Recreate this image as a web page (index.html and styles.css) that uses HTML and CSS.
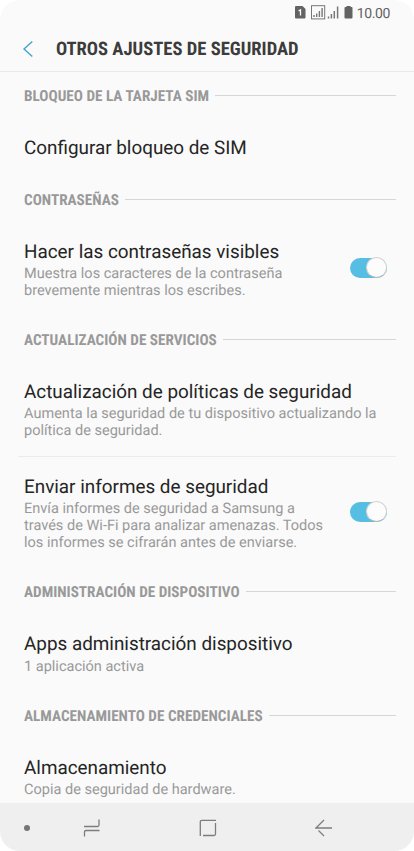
FILE: index.html
```
<!DOCTYPE html>
<html lang="es">
  <head>
    <meta charset="UTF-8" />
    <meta name="viewport" content="width=device-width, initial-scale=1.0" />
    <title>Otros ajustes de seguridad</title>
    <link rel="stylesheet" href="styles.css">
  </head>
  <body>
    <div class="screen">
      <div class="status">
        <svg width="60" height="16" viewBox="0 0 60 16">
          <path d="M2 1h6.500l3 3v8.500q0 1-1 1H2q-1 0-1-1V2q0-1 1-1z" fill="#636363" />
          <path d="M4.600 5.800L6.500 4.800V10.500" fill="none" stroke="#fafafa" stroke-width="1.300" />
          <rect x="17.500" y=".7" width="13.200" height="13.200" fill="none" stroke="#777" />
          <path d="M20 12v-2M22.700 12V8.500M25.400 12V6M28.100 12V3" stroke="#777" stroke-width="1.400" />
          <path d="M34.500 13.500v-2M37.400 13.500v-4.500M40.300 13.500V6M43.600 13.500V1.500" stroke="#777" stroke-width="1.500" />
          <path d="M52.500 1h4v1h1q1 0 1 1v9.500q0 1-1 1h-6q-1 0-1-1V3q0-1 1-1h1z" fill="#636363" />
        </svg>
        <span class="clock">10.00</span>
      </div>

      <header>
        <svg class="back" width="12" height="18" viewBox="0 0 12 18">
          <path d="M10.300 1.600L2 9l8.300 7.400" fill="none" stroke="#45a3cf" stroke-width="1.400" />
        </svg>
        <h1>OTROS AJUSTES DE SEGURIDAD</h1>
      </header>

      <main>
        <h2>BLOQUEO DE LA TARJETA SIM</h2>
        <div class="item">
          <h3>Configurar bloqueo de SIM</h3>
        </div>

        <h2>CONTRASEÑAS</h2>
        <div class="item">
          <h3>Hacer las contraseñas visibles</h3>
          <p>Muestra los caracteres de la contraseña<br>brevemente mientras los escribes.</p>
          <span class="switch"></span>
        </div>

        <h2>ACTUALIZACIÓN DE SERVICIOS</h2>
        <div class="item divided">
          <h3>Actualización de políticas de seguridad</h3>
          <p>Aumenta la seguridad de tu dispositivo actualizando la<br>política de seguridad.</p>
        </div>
        <div class="item after">
          <h3>Enviar informes de seguridad</h3>
          <p>Envía informes de seguridad a Samsung a<br>través de Wi-Fi para analizar amenazas. Todos<br>los informes se cifrarán antes de enviarse.</p>
          <span class="switch"></span>
        </div>

        <h2>ADMINISTRACIÓN DE DISPOSITIVO</h2>
        <div class="item last">
          <h3>Apps administración dispositivo</h3>
          <p>1 aplicación activa</p>
        </div>

        <h2>ALMACENAMIENTO DE CREDENCIALES</h2>
        <div class="item">
          <h3>Almacenamiento</h3>
          <p>Copia de seguridad de hardware.</p>
        </div>
      </main>

      <nav>
        <span class="dot"></span>
        <svg class="recents" width="18" height="20" viewBox="0 0 18 20">
          <path d="M1 8.500h13.500q1.500 0 1.500-1.500V1.500M1.500 18.500V14q0-1.500 1.500-1.500h13.500" fill="none" stroke="#7d7d7d" stroke-width="1.300" />
        </svg>
        <svg class="home" width="18" height="18" viewBox="0 0 18 18">
          <path d="M1.300 17V2.800q0-1.500 1.500-1.500H17M16.500 4v11q0 1.500-1.500 1.500H4" fill="none" stroke="#7d7d7d" stroke-width="1.300" />
        </svg>
        <svg class="return" width="18" height="18" viewBox="0 0 18 18">
          <path d="M9 1L1 9h16M3.500 11.500L9 17" fill="none" stroke="#7d7d7d" stroke-width="1.300" />
        </svg>
      </nav>
    </div>
  </body>
</html>
```
FILE: styles.css
```
body {
  margin: 0;
  background-color: white;
  font-family: Roboto, sans-serif;
  text-rendering: geometricPrecision;
}

h1,
h2,
h3,
p {
  margin: 0;
  font-weight: 400;
  white-space: nowrap;
}

.screen {
  display: flex;
  flex-direction: column;
  width: 414px;
  height: 851px;
  overflow: hidden;
  border-radius: 20px;
  background-color: #fafafa;
}

.status {
  display: flex;
  flex: none;
  align-items: center;
  justify-content: flex-end;
  height: 26px;
  padding-right: 24px;
}

.clock {
  margin-left: 3px;
  padding-top: 1px;
  font-size: 14px;
  letter-spacing: -0.4px;
  color: #636363;
}

header {
  display: flex;
  flex: none;
  align-items: center;
  box-sizing: border-box;
  height: 46px;
  padding-left: 22px;
  border-bottom: 1px solid #e9e9e9;
}

header h1 {
  margin-left: 22px;
  padding-top: 1px;
  font-family: "Roboto Condensed", Roboto, sans-serif;
  font-stretch: 75%;
  font-size: 18.6px;
  font-weight: 700;
  color: #3c3c3c;
}

main {
  flex: 1;
  min-height: 0;
  overflow: hidden;
  padding: 11px 18px 0;
}

h2 {
  display: flex;
  align-items: center;
  box-sizing: border-box;
  height: 24px;
  padding: 2px 0 0 6px;
  font-family: "Roboto Condensed", Roboto, sans-serif;
  font-stretch: 75%;
  font-size: 15.2px;
  line-height: 20px;
  font-weight: 700;
  color: #999;
}

/* streg efter overskriften */
h2::after {
  content: "";
  flex: 1;
  height: 1px;
  margin: 0 0 2px 6px;
  background-color: #d6d6d6;
}

.item {
  position: relative;
  padding: 29px 6px 28px;
}

.item h3 {
  font-size: 18.87px;
  line-height: 24px;
  color: #252525;
}

.item p {
  margin-top: 1px;
  font-size: 14.54px;
  line-height: 17px;
  color: #999;
}

.divided {
  padding-bottom: 17px;
  border-bottom: 1px solid #ebebeb;
}

.after {
  padding-top: 18px;
}

.item:first-of-type {
  padding-bottom: 27px;
}

.last {
  padding-bottom: 28px;
}

.last p {
  margin-top: 2px;
}

.switch {
  position: absolute;
  right: 9px;
  top: 50%;
  width: 37px;
  height: 20px;
  margin-top: -11px;
  border-radius: 10px;
  background-color: #56bee2;
}

.after .switch {
  margin-top: -16px;
}

.switch::after {
  content: "";
  position: absolute;
  right: 0;
  top: -1px;
  box-sizing: border-box;
  width: 21px;
  height: 21px;
  border: 1px solid #d3d3d3;
  border-bottom-color: #b5b5b5;
  border-radius: 50%;
  background-color: #fcfcfc;
}

nav {
  display: flex;
  flex: none;
  align-items: center;
  height: 48px;
  padding: 1px 81px 0 24px;
  box-sizing: border-box;
  background-color: #efefef;
}

.dot {
  width: 6px;
  height: 6px;
  border-radius: 50%;
  background-color: #757575;
}

.recents {
  margin-left: 53px;
}

.home {
  margin-left: 98px;
}

.return {
  margin-left: 98px;
}
```
